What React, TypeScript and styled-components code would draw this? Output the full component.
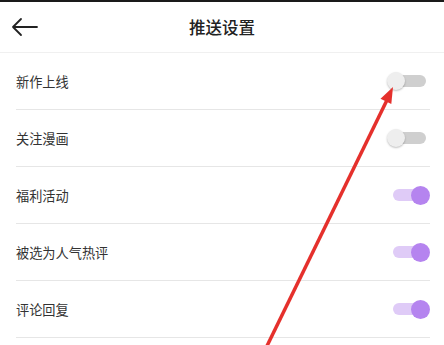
import React from "react";
import styled, { createGlobalStyle } from "styled-components";

const GlobalStyle = createGlobalStyle`
	body {
		margin: 0;
		background: #ffffff;
		font-family: "Noto Sans CJK SC", "Noto Sans", sans-serif;
	}
`;

const Page = styled.div`
	position: relative;
	width: 444px;
	height: 345px;
	overflow: hidden;
	background: #ffffff;
	border-top: 2px solid #1a1a1a;
	box-sizing: border-box;
`;

const Header = styled.div`
	display: grid;
	grid-template-columns: 60px 1fr 60px;
	align-items: center;
	height: 50px;
	border-bottom: 1px solid #f0f0f0;
`;

const BackButton = styled.div`
	display: flex;
	align-items: center;
	padding-left: 11px;
	cursor: pointer;
`;

const Title = styled.span`
	text-align: center;
	font-size: 16.5px;
	font-weight: 500;
	color: #222;
`;

const List = styled.div`
	display: flex;
	flex-direction: column;
`;

const Row = styled.div`
	display: flex;
	align-items: center;
	justify-content: space-between;
	height: 56px;
	margin: 0 14px 0 16px;
	border-bottom: 1px solid #e6e6e6;
`;

const Label = styled.span`
	font-size: 13.2px;
	color: #333;
`;

const SwitchBox = styled.div<{ $on: boolean }>`
	position: relative;
	width: 38px;
	height: 18px;
	margin-right: ${(p) => (p.$on ? 1 : 4)}px;
`;

const Track = styled.div<{ $on: boolean }>`
	position: absolute;
	left: ${(p) => (p.$on ? 2 : 1)}px;
	right: 0;
	top: 3px;
	height: 12px;
	border-radius: 6px;
	background: ${(p) => (p.$on ? "#dfcbf7" : "#cfcfcf")};
`;

const Thumb = styled.div<{ $on: boolean }>`
	position: absolute;
	top: 0;
	${(p) => (p.$on ? "right: -1px;" : "left: -1px;")}
	width: ${(p) => (p.$on ? 19 : 18)}px;
	height: ${(p) => (p.$on ? 19 : 18)}px;
	border-radius: 50%;
	background: ${(p) => (p.$on ? "#b584ef" : "#eeeeee")};
	box-shadow: ${(p) =>
		p.$on ? "none" : "0 1px 2px rgba(0, 0, 0, 0.25)"};
`;

const Overlay = styled.svg`
	position: absolute;
	left: 0;
	top: -2px;
	pointer-events: none;
`;

const Switch: React.FC<{ on: boolean }> = ({ on }) => (
	<SwitchBox $on={on}>
		<Track $on={on} />
		<Thumb $on={on} />
	</SwitchBox>
);

const items = [
	{ label: "新作上线", on: false },
	{ label: "关注漫画", on: false },
	{ label: "福利活动", on: true },
	{ label: "被选为人气热评", on: true },
	{ label: "评论回复", on: true },
];

export default function App() {
	return (
		<>
			<GlobalStyle />
			<Page>
				<Header>
					<BackButton>
						<svg width="28" height="20" viewBox="0 0 28 20">
							<path
								d="M2 10 H26 M10 2 L2 10 L10 18"
								fill="none"
								stroke="#222"
								strokeWidth="1.8"
								strokeLinecap="round"
								strokeLinejoin="round"
							/>
						</svg>
					</BackButton>
					<Title>推送设置</Title>
					<div />
				</Header>
				<List>
					{items.map((item) => (
						<Row key={item.label}>
							<Label>{item.label}</Label>
							<Switch on={item.on} />
						</Row>
					))}
				</List>
				<Overlay width="444" height="345" viewBox="0 0 444 345">
					<line
						x1="266"
						y1="348"
						x2="388"
						y2="98"
						stroke="#e5302c"
						strokeWidth="3.5"
					/>
					<polygon
						points="393,87 391.3,104 380.5,98.7"
						fill="#e5302c"
					/>
				</Overlay>
			</Page>
		</>
	);
}
